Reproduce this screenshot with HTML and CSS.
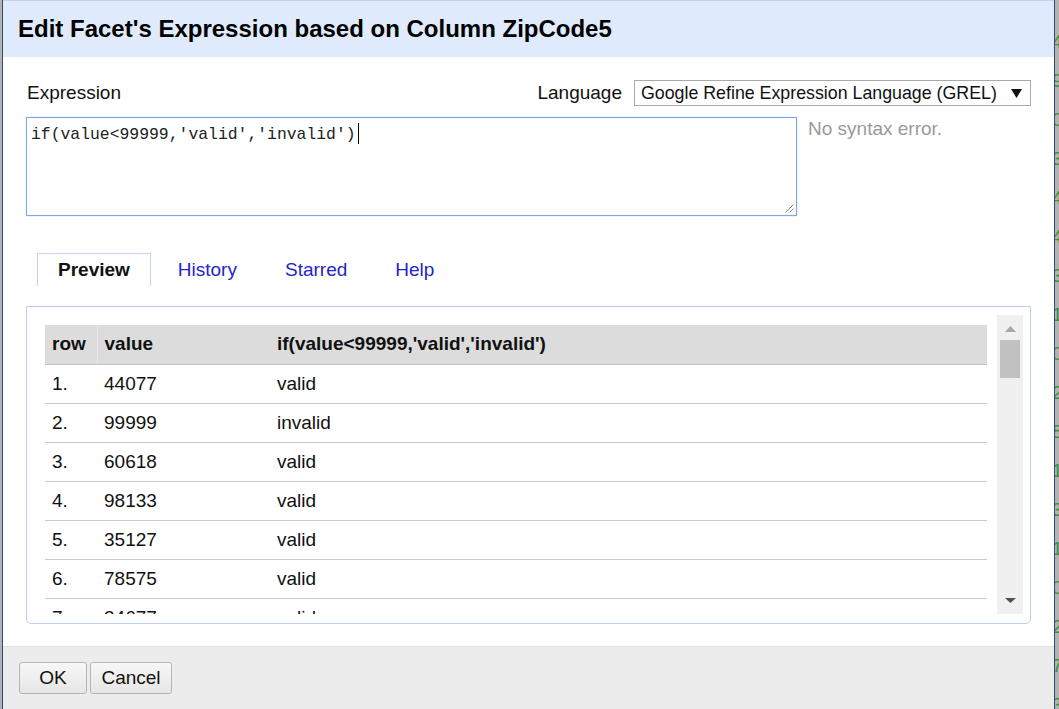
FILE: index.html
```html
<!DOCTYPE html>
<html>
<head>
<meta charset="utf-8">
<link rel="stylesheet" href="styles.css">
</head>
<body>
<div class="page">
  <div class="dialog">
    <div class="dlg-header">Edit Facet's Expression based on Column ZipCode5</div>
    <div class="dlg-body">
      <div class="top-row">
        <div class="label">Expression</div>
        <div class="lang">
          <span class="label">Language</span>
          <div class="select">
            <span>Google Refine Expression Language (GREL)</span>
            <svg class="sel-arrow" width="11" height="9" viewBox="0 0 11 9"><polygon points="0,0 11,0 5.5,9" fill="#111"/></svg>
          </div>
        </div>
      </div>
      <div class="expr-row">
        <div class="textarea">
          <span class="code">if(value&lt;99999,'valid','invalid')</span><span class="caret"></span>
          <svg class="grip" width="10" height="10" viewBox="0 0 10 10"><line x1="9.5" y1="1.5" x2="1.5" y2="9.5" stroke="#888" stroke-width="1"/><line x1="9.5" y1="5.5" x2="5.5" y2="9.5" stroke="#888" stroke-width="1"/></svg>
        </div>
        <div class="status">No syntax error.</div>
      </div>
      <div class="tabs">
        <div class="tab active">Preview</div>
        <div class="tab">History</div>
        <div class="tab">Starred</div>
        <div class="tab">Help</div>
      </div>
      <div class="panel">
        <div class="viewport">
          <table class="preview">
            <thead>
              <tr><th class="c1">row</th><th class="c2">value</th><th class="c3">if(value&lt;99999,'valid','invalid')</th></tr>
            </thead>
            <tbody>
              <tr><td>1.</td><td>44077</td><td>valid</td></tr>
              <tr><td>2.</td><td>99999</td><td>invalid</td></tr>
              <tr><td>3.</td><td>60618</td><td>valid</td></tr>
              <tr><td>4.</td><td>98133</td><td>valid</td></tr>
              <tr><td>5.</td><td>35127</td><td>valid</td></tr>
              <tr><td>6.</td><td>78575</td><td>valid</td></tr>
              <tr><td>7.</td><td>34677</td><td>valid</td></tr>
              <tr><td>8.</td><td>10001</td><td>valid</td></tr>
            </tbody>
          </table>
        </div>
        <div class="scrollbar">
          <svg class="sb-up" width="11" height="6" viewBox="0 0 11 6"><polygon points="0,6 11,6 5.5,0" fill="#a8a8a8"/></svg>
          <div class="sb-thumb"></div>
          <div class="sb-space"></div>
          <svg class="sb-down" width="11" height="5" viewBox="0 0 11 5"><polygon points="0,0 11,0 5.5,5" fill="#505050"/></svg>
        </div>
      </div>
    </div>
    <div class="dlg-footer">
      <button class="btn ok">OK</button>
      <button class="btn cancel">Cancel</button>
    </div>
  </div>
  <div class="behind">
    <span>4</span><span>9</span><span>0</span><span>3</span><span>4</span><span>4</span><span>3</span><span>1</span><span>0</span><span>2</span><span>8</span><span>1</span><span>3</span><span>1</span><span>0</span><span>2</span><span>7</span><span>3</span>
  </div>
</div>
</body>
</html>
```

FILE: styles.css
```css
* { box-sizing: border-box; }
html, body { margin: 0; padding: 0; }
body {
  width: 1059px;
  height: 709px;
  overflow: hidden;
  background: #b3b3b3;
  font-family: "Liberation Sans", Arial, sans-serif;
  color: #111;
}
.page {
  display: flex;
  height: 709px;
  padding-left: 2px;
}
.dialog {
  width: 1053px;
  height: 709px;
  border-left: 1px solid #2f4c78;
  border-right: 1px solid #2f4c78;
  background: #fff;
  display: flex;
  flex-direction: column;
}
.dlg-header {
  height: 57px;
  flex: none;
  background: #dfeafc;
  border-top: 1px solid #c4d3ec;
  padding-left: 15px;
  font-size: 24px;
  font-weight: bold;
  line-height: 55px;
  color: #000;
  white-space: nowrap;
}
.dlg-body {
  flex: 1;
  padding: 23px 23px 0 23px;
  display: flex;
  flex-direction: column;
}
.top-row {
  display: flex;
  justify-content: space-between;
  align-items: center;
  height: 26px;
  padding-left: 1px;
}
.label {
  font-size: 19px;
  color: #111;
}
.lang {
  display: flex;
  align-items: center;
  gap: 12px;
}
.select {
  width: 397px;
  height: 26px;
  border: 1px solid #a9a9a9;
  background: #fff;
  display: flex;
  align-items: center;
  justify-content: space-between;
  padding: 0 8px 0 6px;
  font-size: 17.8px;
  color: #111;
  white-space: nowrap;
}
.sel-arrow { display: block; }
.expr-row {
  display: flex;
  align-items: flex-start;
  margin-top: 11px;
  gap: 11px;
}
.textarea {
  position: relative;
  width: 771px;
  height: 99px;
  border: 1px solid #7ea6ea;
  box-shadow: 0 0 1px #a9c4f2;
  padding: 5px 4px;
  font-family: "Liberation Mono", "DejaVu Sans Mono", monospace;
  font-size: 16.4px;
  line-height: 20px;
  color: #222;
  white-space: nowrap;
}
.caret {
  display: inline-block;
  width: 1px;
  height: 21px;
  background: #000;
  vertical-align: -5px;
  margin-left: 2px;
}
.grip {
  position: absolute;
  right: 2px;
  bottom: 2px;
}
.status {
  font-size: 19px;
  color: #9a9a9a;
  margin-top: 1px;
}
.tabs {
  display: flex;
  margin-top: 37px;
  padding-left: 11px;
  height: 33px;
}
.tab {
  border: 1px solid transparent;
  border-bottom: none;
  padding: 0 20px;
  margin-right: 6px;
  font-size: 19px;
  line-height: 31px;
  color: #2424cc;
}
.tab.active {
  border-color: #c6d4f4;
  color: #111;
  font-weight: bold;
}
.panel {
  margin-top: 20px;
  height: 318px;
  border: 1px solid #bccdf6;
  border-radius: 0 0 5px 5px;
  padding: 8px 7px 9px 9px;
  display: flex;
}
.viewport {
  flex: 1;
  height: 299px;
  overflow: hidden;
  padding: 10px 10px 0 9px;
}
.preview {
  width: 100%;
  border-collapse: collapse;
  font-size: 19px;
}
.preview th, .preview td {
  height: 39px;
  padding: 0 0 0 7px;
  text-align: left;
  white-space: nowrap;
  border-bottom: 1px solid #c9c9c9;
  color: #111;
}
.preview th {
  background: #dcdcdc;
  font-weight: bold;
  border-bottom: 1px solid #c4c4c4;
}
.preview th.c1 { width: 52px; }
.preview th.c2 { width: 173px; border-left: 1px solid #e6e6e6; }
.scrollbar {
  width: 26px;
  height: 299px;
  background: #f0f0f0;
  display: flex;
  flex-direction: column;
  align-items: center;
}
.sb-up { margin-top: 11px; display: block; }
.sb-thumb {
  margin-top: 8px;
  width: 20px;
  height: 38px;
  background: #c1c1c1;
}
.sb-space { flex: 1; }
.sb-down { margin-bottom: 11px; display: block; }
.dlg-footer {
  height: 63px;
  flex: none;
  background: #ececec;
  border-top: 1px solid #e2e2e2;
  padding: 15px 0 0 16px;
  display: flex;
  align-items: flex-start;
  gap: 3px;
}
.btn {
  height: 32px;
  border: 1px solid #b5b5b5;
  border-radius: 3px;
  background: linear-gradient(#f7f7f7, #e6e6e6);
  font-family: "Liberation Sans", Arial, sans-serif;
  font-size: 19px;
  color: #111;
  padding: 0;
}
.btn.ok { width: 68px; }
.btn.cancel { width: 82px; }
.behind {
  flex: 1;
  display: flex;
  flex-direction: column;
  padding-top: 22px;
  overflow: hidden;
  font-size: 19px;
  line-height: 39px;
  color: #3f8f3f;
}
.behind span { display: block; margin-left: -3px; }
```
